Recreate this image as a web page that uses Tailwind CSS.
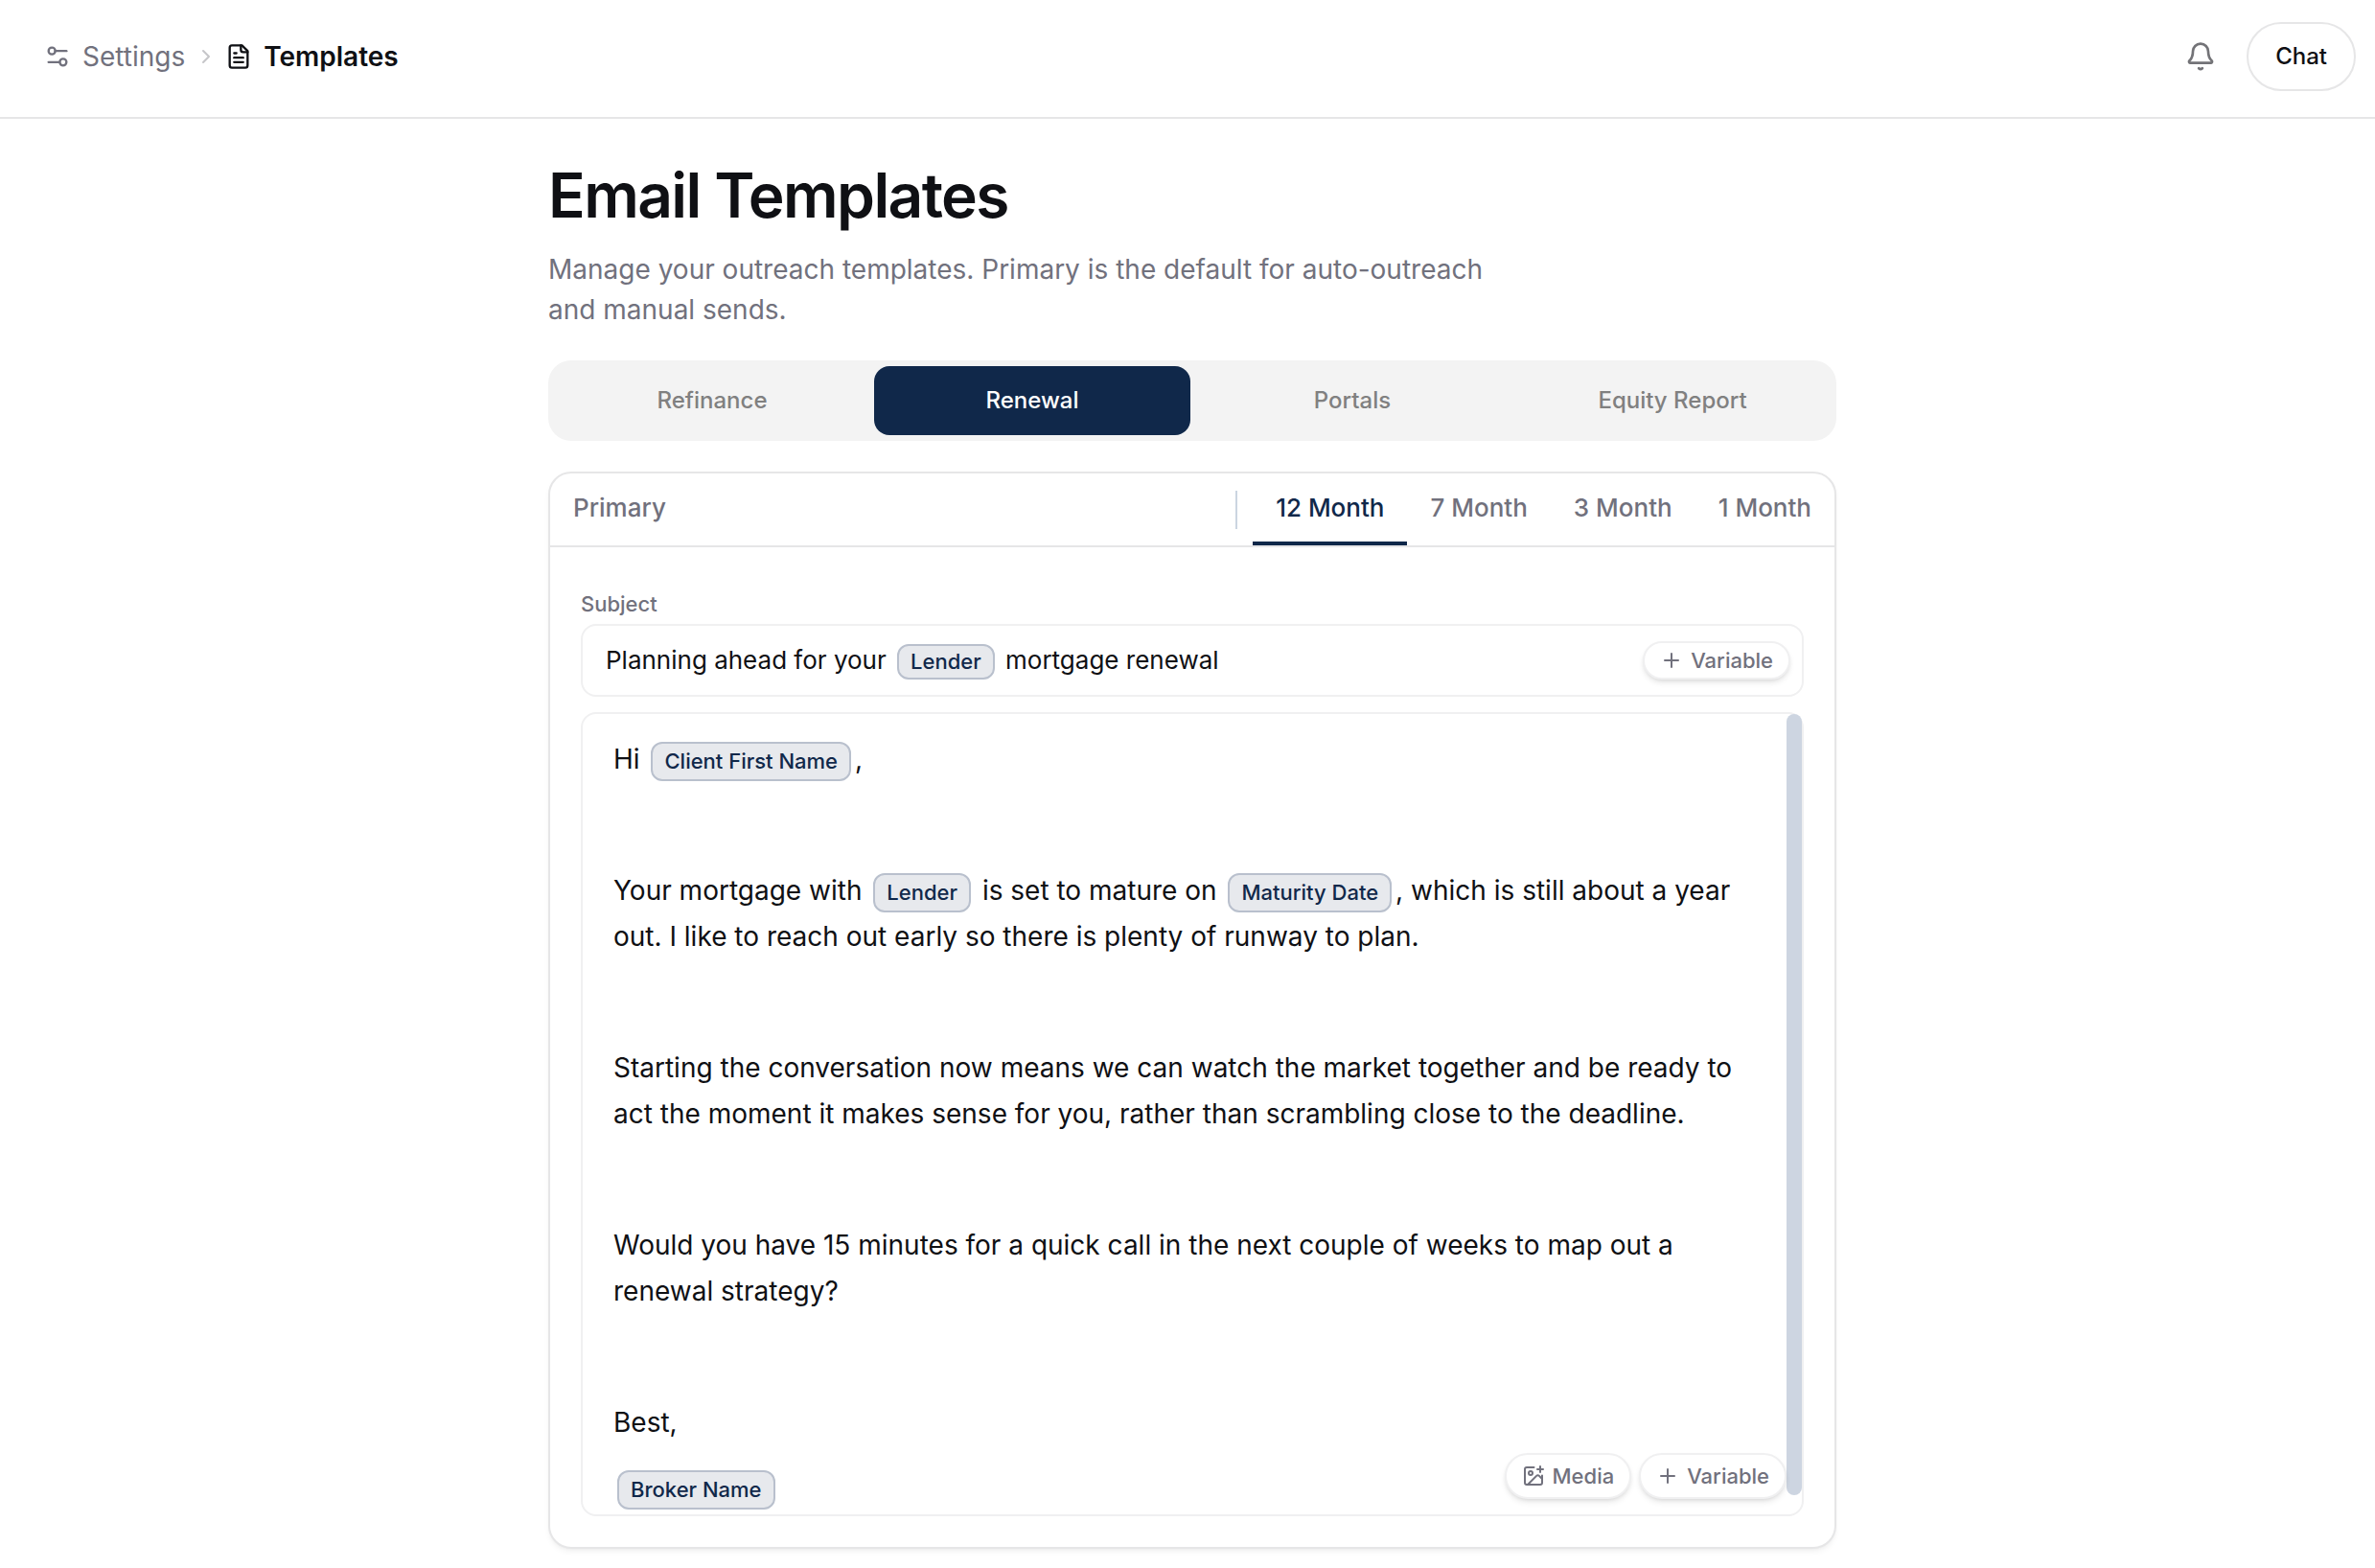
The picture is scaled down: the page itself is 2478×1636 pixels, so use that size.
<!DOCTYPE html>
<html lang="en">
<head>
<meta charset="utf-8">
<meta name="viewport" content="width=device-width, initial-scale=1">
<title>Email Templates</title>
<script src="https://cdn.jsdelivr.net/npm/@tailwindcss/browser@4"></script>
</head>
<body class="min-h-screen bg-white font-['Inter',sans-serif] text-[#0f1014] overflow-x-hidden">
<header class="flex h-[124px] items-center justify-between border-b-2 border-[#e6e6e7] pr-5 pb-1 pl-[46px]">
  <nav aria-label="Breadcrumb" class="flex items-center text-[28px] leading-10">
    <a href="#" class="flex items-center gap-3 text-[#71717d]">
      <svg class="size-7" viewBox="0 0 24 24" fill="none" stroke="currentColor" stroke-width="2" stroke-linecap="round" stroke-linejoin="round"><path d="M14 17H4"/><path d="M20 7H10"/><circle cx="17" cy="17" r="3"/><circle cx="7" cy="7" r="3"/></svg>
      Settings
    </a>
    <svg class="mr-2 ml-2.5 size-6 text-[#c6c6c9]" viewBox="0 0 24 24" fill="none" stroke="currentColor" stroke-width="2" stroke-linecap="round" stroke-linejoin="round"><path d="m9 18 6-6-6-6"/></svg>
    <a href="#" aria-current="page" class="flex items-center gap-3 font-semibold">
      <svg class="size-7" viewBox="0 0 24 24" fill="none" stroke="currentColor" stroke-width="2" stroke-linecap="round" stroke-linejoin="round"><path d="M15 2H6a2 2 0 0 0-2 2v16a2 2 0 0 0 2 2h12a2 2 0 0 0 2-2V7Z"/><path d="M14 2v4a2 2 0 0 0 2 2h4"/><path d="M10 9H8"/><path d="M16 13H8"/><path d="M16 17H8"/></svg>
      Templates
    </a>
  </nav>
  <div class="flex items-center gap-8">
    <button type="button" aria-label="Notifications" class="text-[#737377]">
      <svg class="size-8" viewBox="0 0 24 24" fill="none" stroke="currentColor" stroke-width="2" stroke-linecap="round" stroke-linejoin="round"><path d="M10.600 21.200a2 2 0 0 0 2.800 0"/><path d="M3.262 15.326A1 1 0 0 0 4 17h16a1 1 0 0 0 .74-1.673C19.41 13.956 18 12.499 18 8A6 6 0 0 0 6 8c0 4.499-1.411 5.956-2.738 7.326"/></svg>
    </button>
    <button type="button" class="h-[72px] rounded-full border-2 border-[#e6e6e7] px-7 text-2xl font-medium">Chat</button>
  </div>
</header>

<div class="pl-2.5">
<main class="mx-auto w-full max-w-[1344px] pt-10 pb-5">
  <h1 class="text-[64px] leading-[80px] font-semibold tracking-tight">Email Templates</h1>
  <p class="mt-4 max-w-[1024px] text-[28px] leading-[42px] text-[#71717d]">Manage your outreach templates. Primary is the default for auto-outreach and manual sends.</p>

  <div role="tablist" aria-label="Template type" class="mt-8 grid grid-cols-4 gap-1 rounded-3xl bg-[#f3f3f3] p-1.5 text-2xl font-medium text-[#808080]">
    <button type="button" role="tab" class="h-[72px] rounded-2xl">Refinance</button>
    <button type="button" role="tab" aria-selected="true" class="h-[72px] rounded-2xl bg-[#10284a] text-white">Renewal</button>
    <button type="button" role="tab" class="h-[72px] rounded-2xl">Portals</button>
    <button type="button" role="tab" class="h-[72px] rounded-2xl">Equity Report</button>
  </div>

  <section class="mt-8 rounded-3xl border-2 border-[#e6e6e7] bg-white shadow-md shadow-black/5">
    <div role="tablist" aria-label="Send time" class="flex h-[77px] items-stretch border-b-2 border-[#e6e6e7] text-[26px] font-medium text-[#71717d]">
      <button type="button" role="tab" class="border-b-4 border-transparent px-6">Primary</button>
      <span class="mr-4 ml-auto h-10 w-0.5 self-center bg-[#cbd5e1]"></span>
      <button type="button" role="tab" aria-selected="true" class="border-b-4 border-[#10284a] px-6 text-[#10284a]">12 Month</button>
      <button type="button" role="tab" class="border-b-4 border-transparent px-6">7 Month</button>
      <button type="button" role="tab" class="border-b-4 border-transparent px-6">3 Month</button>
      <button type="button" role="tab" class="border-b-4 border-transparent px-6">1 Month</button>
    </div>

    <div class="px-8 pt-11 pb-8">
      <span id="subject-label" class="block text-[22px] leading-[30px] font-medium text-[#71717d]">Subject</span>
      <div class="mt-1.5 flex h-[76px] items-center justify-between rounded-2xl border-2 border-[#f0f0f1] pr-3 pl-6">
        <div role="textbox" aria-labelledby="subject-label" contenteditable="true" spellcheck="false" class="text-[26px] leading-10 outline-none">Planning ahead for your <span class="mx-1 inline-block rounded-xl border-2 border-[#b9c0cd] bg-[#e7e9ed] px-3 py-0.5 text-[22px] leading-[29px] font-medium text-[#10284a]">Lender</span> mortgage renewal</div>
        <button type="button" class="flex h-10 items-center gap-2 rounded-full border-2 border-[#f0f0f1] bg-white px-4 text-[22px] font-medium text-[#71717d] shadow-md shadow-black/10">
          <svg class="size-6" viewBox="0 0 24 24" fill="none" stroke="currentColor" stroke-width="2" stroke-linecap="round"><path d="M5 12h14"/><path d="M12 5v14"/></svg>
          Variable
        </button>
      </div>

      <div class="relative mt-4 rounded-2xl border-2 border-[#f0f0f1]">
        <div role="textbox" aria-multiline="true" aria-label="Message" contenteditable="true" spellcheck="false" class="space-y-[89px] pt-[23px] pr-12 pb-1 pl-8 text-[28px] leading-[48px] outline-none">
          <p>Hi <span class="mx-1 inline-block rounded-xl border-2 border-[#b9c0cd] bg-[#e7e9ed] px-3 py-1 text-[22px] leading-[29px] font-medium text-[#10284a]">Client First Name</span>,</p>
          <p>Your mortgage with <span class="mx-1 inline-block rounded-xl border-2 border-[#b9c0cd] bg-[#e7e9ed] px-3 py-1 text-[22px] leading-[29px] font-medium text-[#10284a]">Lender</span> is set to mature on <span class="mx-1 inline-block rounded-xl border-2 border-[#b9c0cd] bg-[#e7e9ed] px-3 py-1 text-[22px] leading-[29px] font-medium text-[#10284a]">Maturity Date</span>, which is still about a year out. I like to reach out early so there is plenty of runway to plan.</p>
          <p>Starting the conversation now means we can watch the market together and be ready to act the moment it makes sense for you, rather than scrambling close to the deadline.</p>
          <p>Would you have 15 minutes for a quick call in the next couple of weeks to map out a renewal strategy?</p>
          <div>
            <p>Best,</p>
            <p class="pt-5"><span class="mx-1 inline-block rounded-xl border-2 border-[#b9c0cd] bg-[#e7e9ed] px-3 py-1 text-[22px] leading-[29px] font-medium text-[#10284a]">Broker Name</span></p>
          </div>
        </div>
        <div class="absolute top-0 right-0 bottom-5 w-4 rounded-full bg-[#cdd5e1]"></div>
        <div class="absolute right-4 bottom-4 flex gap-2 text-[22px] font-medium text-[#71717d]">
          <button type="button" class="flex h-12 items-center gap-2 rounded-full border-2 border-[#f0f0f1] bg-white px-4 shadow-md shadow-black/10">
            <svg class="size-6" viewBox="0 0 24 24" fill="none" stroke="currentColor" stroke-width="2" stroke-linecap="round" stroke-linejoin="round"><path d="M16 5h6"/><path d="M19 2v6"/><path d="M21 11.5V19a2 2 0 0 1-2 2H5a2 2 0 0 1-2-2V5a2 2 0 0 1 2-2h7.5"/><path d="m21 15-3.086-3.086a2 2 0 0 0-2.828 0L6 21"/><circle cx="9" cy="9" r="2"/></svg>
            Media
          </button>
          <button type="button" class="flex h-12 items-center gap-2 rounded-full border-2 border-[#f0f0f1] bg-white px-4 shadow-md shadow-black/10">
            <svg class="size-6" viewBox="0 0 24 24" fill="none" stroke="currentColor" stroke-width="2" stroke-linecap="round"><path d="M5 12h14"/><path d="M12 5v14"/></svg>
            Variable
          </button>
        </div>
      </div>
    </div>
  </section>
</main>
</div>
</body>
</html>
